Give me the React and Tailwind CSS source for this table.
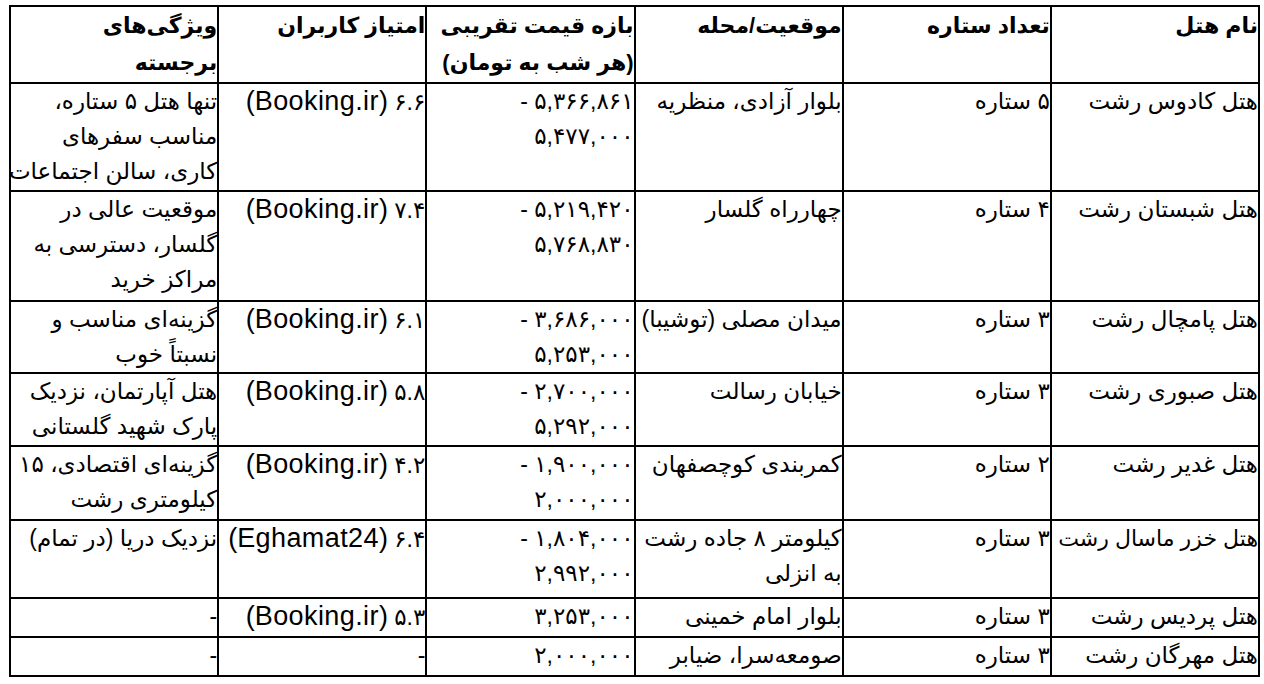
const HEAD = [
  ["نام هتل"],
  ["تعداد ستاره"],
  ["موقعیت/محله"],
  ["بازه قیمت تقریبی", "(هر شب به تومان)"],
  ["امتیاز کاربران"],
  ["ویژگی‌های", "برجسته"],
];

// strings are plain lines; [score, source] pairs get the latin source in a bigger face
const ROWS = [
  {
    h: "h-[108px]",
    cells: [
      ["هتل کادوس رشت"],
      ["۵ ستاره"],
      ["بلوار آزادی، منظریه"],
      ["۵,۳۶۶,۸۶۱ -", "۵,۴۷۷,۰۰۰"],
      [["۶.۶", "Booking.ir"]],
      ["تنها هتل ۵ ستاره،", "مناسب سفرهای", "کاری، سالن اجتماعات"],
    ],
  },
  {
    h: "h-[110px]",
    cells: [
      ["هتل شبستان رشت"],
      ["۴ ستاره"],
      ["چهارراه گلسار"],
      ["۵,۲۱۹,۴۲۰ -", "۵,۷۶۸,۸۳۰"],
      [["۷.۴", "Booking.ir"]],
      ["موقعیت عالی در", "گلسار، دسترسی به", "مراکز خرید"],
    ],
  },
  {
    h: "h-[72px]",
    cells: [
      ["هتل پامچال رشت"],
      ["۳ ستاره"],
      ["میدان مصلی (توشیبا)"],
      ["۳,۶۸۶,۰۰۰ -", "۵,۲۵۳,۰۰۰"],
      [["۶.۱", "Booking.ir"]],
      ["گزینه‌ای مناسب و", "نسبتاً خوب"],
    ],
  },
  {
    h: "h-[73px]",
    cells: [
      ["هتل صبوری رشت"],
      ["۳ ستاره"],
      ["خیابان رسالت"],
      ["۲,۷۰۰,۰۰۰ -", "۵,۲۹۲,۰۰۰"],
      [["۵.۸", "Booking.ir"]],
      ["هتل آپارتمان، نزدیک", "پارک شهید گلستانی"],
    ],
  },
  {
    h: "h-[74px]",
    cells: [
      ["هتل غدیر رشت"],
      ["۲ ستاره"],
      ["کمربندی کوچصفهان"],
      ["۱,۹۰۰,۰۰۰ -", "۲,۰۰۰,۰۰۰"],
      [["۴.۲", "Booking.ir"]],
      ["گزینه‌ای اقتصادی، ۱۵", "کیلومتری رشت"],
    ],
  },
  {
    h: "h-[78px]",
    cells: [
      ["هتل خزر ماسال رشت"],
      ["۳ ستاره"],
      ["کیلومتر ۸ جاده رشت", "به انزلی"],
      ["۱,۸۰۴,۰۰۰ -", "۲,۹۹۲,۰۰۰"],
      [["۶.۴", "Eghamat24"]],
      ["نزدیک دریا (در تمام)"],
    ],
    tight: true,
  },
  {
    h: "h-[39px]",
    cells: [
      ["هتل پردیس رشت"],
      ["۳ ستاره"],
      ["بلوار امام خمینی"],
      ["۳,۲۵۳,۰۰۰"],
      [["۵.۳", "Booking.ir"]],
      ["-"],
    ],
  },
  {
    h: "h-[39px]",
    cells: [
      ["هتل مهرگان رشت"],
      ["۳ ستاره"],
      ["صومعه‌سرا، ضیابر"],
      ["۲,۰۰۰,۰۰۰"],
      ["-"],
      ["-"],
    ],
  },
];

function Lines({ lines }) {
  return lines.map((l, i) => (
    <div key={i} className="whitespace-nowrap">
      {Array.isArray(l) ? (
        <>
          {l[0]}{" "}
          <span className="text-[27px] leading-[35px] tracking-[0.4px]">({l[1]})</span>
        </>
      ) : (
        l
      )}
    </div>
  ));
}

export default function App() {
  return (
    <div className="w-[1264px] h-[684px] bg-white pt-[5px] pl-[9px] overflow-hidden">
      <table
        dir="rtl"
        className="w-[1251px] table-fixed border-collapse border-2 border-black text-black text-[23px] leading-[35px] font-['Liberation_Sans','DejaVu_Sans',sans-serif]"
      >
        <thead>
          <tr className="h-[77px]">
            {HEAD.map((c, i) => (
              <th
                key={i}
                className="border-2 border-black align-top text-right font-bold text-[22px] leading-[37px] p-0"
              >
                <Lines lines={c} />
              </th>
            ))}
          </tr>
        </thead>
        <tbody>
          {ROWS.map((r, ri) => (
            <tr key={ri} className={r.h}>
              {r.cells.map((c, i) => (
                <td
                  key={i}
                  className={
                    "border-2 border-black align-top text-right p-0" +
                    (r.tight && i === 0 ? " text-[22px]" : "")
                  }
                >
                  <Lines lines={c} />
                </td>
              ))}
            </tr>
          ))}
        </tbody>
      </table>
    </div>
  );
}
